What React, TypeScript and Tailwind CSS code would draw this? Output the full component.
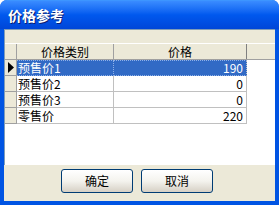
const rows = [
  { name: "预售价1", price: "190", selected: true },
  { name: "预售价2", price: "0" },
  { name: "预售价3", price: "0" },
  { name: "零售价", price: "220" },
];

const font = "font-['Tahoma','Noto_Sans_CJK_SC',sans-serif]";

function XpButton({ label }: { label: string }) {
  return (
    <button className="w-[72px] h-[24px] rounded-[3px] border border-[#003C74] bg-gradient-to-b from-[#FFFFFF] via-[#F4F3EE] to-[#D6D0C5] text-[12px] leading-none text-black">
      {label}
    </button>
  );
}

export default function App() {
  return (
    <div className={`w-[279px] h-[205px] bg-white ${font} text-[12px] text-black`}>
      <div className="h-full flex flex-col rounded-t-[7px] overflow-hidden bg-[#0054E3]">
        {/* title bar */}
        <div className="h-[29px] shrink-0 flex items-center pl-[8px] bg-gradient-to-b from-[#3A8CFF] via-[#0058EE] to-[#0046D8] border-t border-[#3D95FF]">
          <span className="text-white font-bold text-[14px] leading-none [text-shadow:1px_1px_0_#0A1E70]">价格参考</span>
        </div>

        <div className="flex-1 mx-[4px] mb-[4px] bg-[#ECE9D8] flex flex-col">
          {/* grid */}
          <div className="h-[136px] shrink-0 bg-white border-t border-l border-[#7F9DB9] flex flex-col">
            <div className="h-[13px] bg-[#ECE9D8]" />
            <div className="flex h-[17px] bg-[#ECE9D8] border-t border-white border-b border-b-[#A0A0A0]">
              <div className="w-[12px] border-r border-[#A0A0A0]" />
              <div className="w-[97px] border-r border-[#A0A0A0] flex items-center justify-center leading-none">价格类别</div>
              <div className="w-[133px] border-r border-[#808080] flex items-center justify-center leading-none">价格</div>
            </div>
            {rows.map((r) => (
              <div key={r.name} className="flex h-[16px]">
                <div className="w-[12px] bg-[#ECE9D8] border-r border-b border-[#A0A0A0] flex items-center justify-center">
                  {r.selected && (
                    <svg width="6" height="11" viewBox="0 0 6 11">
                      <path d="M0 0 L6 5.5 L0 11 Z" fill="#000" />
                    </svg>
                  )}
                </div>
                <div
                  className={`w-[97px] border-r border-b flex items-center pl-[1px] leading-none ${
                    r.selected
                      ? "bg-[#316AC5] text-white border-dotted border-y border-y-[#8EB0E8] border-r-[#8EB0E8]"
                      : "border-[#C0C0C0]"
                  }`}
                >
                  {r.name}
                </div>
                <div
                  className={`w-[133px] border-r border-b flex items-center justify-end pr-[3px] leading-none ${
                    r.selected
                      ? "bg-[#316AC5] text-white border-dotted border-y border-y-[#8EB0E8] border-r-[#C0C0C0]"
                      : "border-[#C0C0C0]"
                  }`}
                >
                  {r.price}
                </div>
              </div>
            ))}
          </div>

          {/* footer */}
          <div className="flex-1 flex items-start pt-[4px] pl-[57px] gap-[8px]">
            <XpButton label="确定" />
            <XpButton label="取消" />
          </div>
        </div>
      </div>
    </div>
  );
}
